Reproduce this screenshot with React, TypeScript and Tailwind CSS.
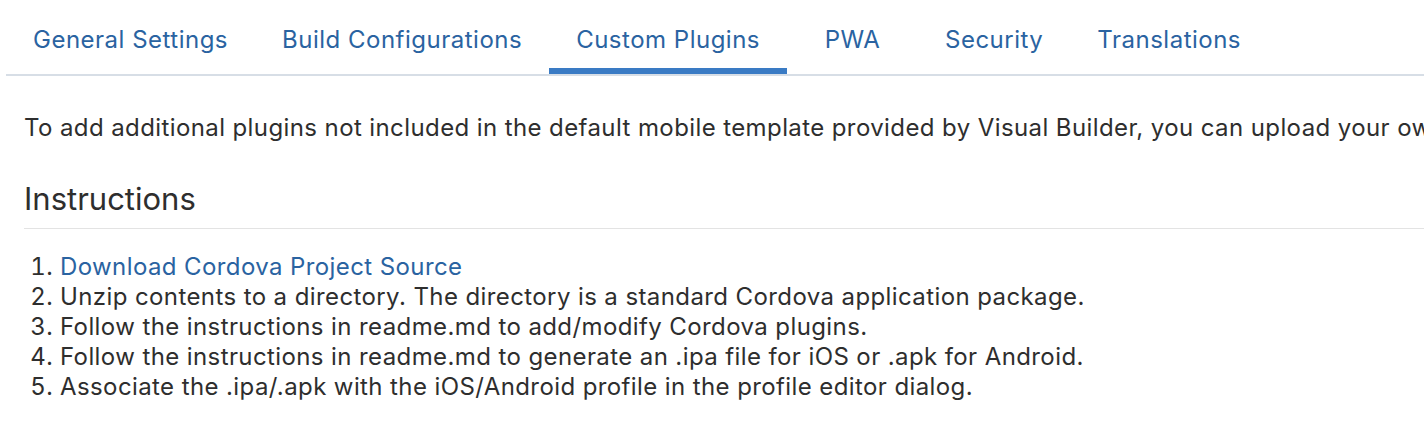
import React from "react";

const tabs = ["General Settings", "Build Configurations", "Custom Plugins", "PWA", "Security", "Translations"];

export default function App() {
  return (
    <div className="w-[1424px] h-[438px] overflow-hidden bg-white" style={{ fontFamily: "Inter, 'Noto Sans', sans-serif" }}>
      <div className="pt-[16px] pl-[6px]">
        <div className="flex border-b-2 border-[#d7dee6]">
          {tabs.map((t) => (
            <div
              key={t}
              className={
                "px-[27px] min-w-[131px] justify-center h-[58px] flex items-center text-[24px] tracking-[0.5px] text-[#2a63a1] " +
                (t === "Custom Plugins" ? "border-b-[6px] border-[#3a7bc4] pb-[4px]" : "pb-[10px]")
              }
            >
              {t}
            </div>
          ))}
        </div>
      </div>
      <div className="pl-[24px] text-[#2e2e2e]">
        <p className="mt-[37px] text-[24px] tracking-[0.4px] leading-[30px] whitespace-nowrap">
          To add additional plugins not included in the default mobile template provided by Visual Builder, you can upload your own custom Cordova build.
        </p>
        <h2 className="mt-[37px] text-[31px] leading-[38px] pb-[10px] border-b border-[#e3e3e3]">Instructions</h2>
        <ol className="mt-[23px] text-[24px] tracking-[0.4px] leading-[30px] list-decimal pl-[36px]">
          <li>
            <a className="text-[#2a63a1]" href="#">Download Cordova Project Source</a>
          </li>
          <li>Unzip contents to a directory. The directory is a standard Cordova application package.</li>
          <li>Follow the instructions in readme.md to add/modify Cordova plugins.</li>
          <li>Follow the instructions in readme.md to generate an .ipa file for iOS or .apk for Android.</li>
          <li>Associate the .ipa/.apk with the iOS/Android profile in the profile editor dialog.</li>
        </ol>
      </div>
    </div>
  );
}
